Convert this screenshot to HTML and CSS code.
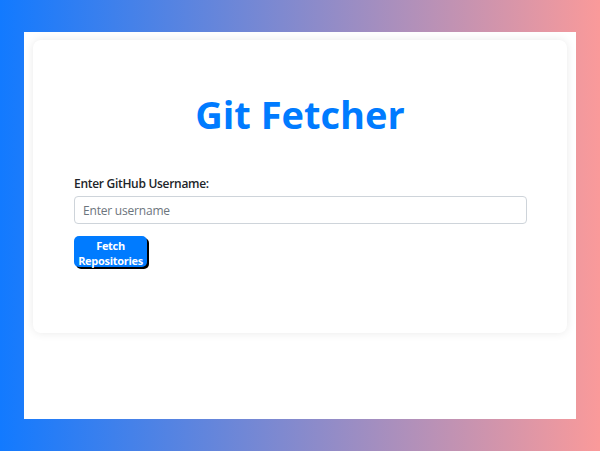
FILE: index.html
```html
<!DOCTYPE html>
<html lang="en">
<head>
<meta charset="utf-8">
<title>Git Fetcher</title>
<link rel="stylesheet" href="styles.css">
</head>
<body>
<div class="page">
  <div class="card">
    <h1 class="title">Git Fetcher</h1>
    <label class="label" for="user">Enter GitHub Username:</label>
    <input class="input" id="user" type="text" placeholder="Enter username">
    <button class="btn" type="button"><span class="btn-line">Fetch</span><span class="btn-line">Repositories</span></button>
  </div>
</div>
</body>
</html>
```

FILE: styles.css
```css
* { box-sizing: border-box; }
html, body { margin: 0; height: 100%; }
body {
  background: linear-gradient(to right, #127aff 0%, #fa9a9a 100%);
  padding: 32px 24px;
  font-family: "Open Sans", "Noto Sans", sans-serif;
}
.page {
  background: #fff;
  height: 387px;
  padding: 8px 9px;
}
.card {
  background: #fff;
  border-radius: 8px;
  box-shadow: 0 0 10px rgba(0,0,0,0.09);
  height: 293px;
  padding: 49px 41px 0;
  display: flex;
  flex-direction: column;
  align-items: flex-start;
}
.title {
  align-self: stretch;
  text-align: center;
  margin: 0 0 36px;
  color: #007bff;
  font-size: 38px;
  font-weight: 700;
  line-height: 50px;
}
.label {
  font-size: 12px;
  font-weight: 600;
  letter-spacing: -0.3px;
  color: #212529;
  line-height: 18px;
  margin-bottom: 3px;
}
.input {
  width: 453px;
  height: 28px;
  border: 1px solid #ced4da;
  border-radius: 4px;
  padding: 0 8px;
  font-family: inherit;
  font-size: 12px;
  letter-spacing: -0.2px;
  color: #495057;
}
.input::placeholder { color: #6c757d; }
.btn {
  margin-top: 12px;
  width: 73px;
  height: 31px;
  background: #007bff;
  color: #fff;
  border: none;
  border-radius: 5px;
  box-shadow: 2px 2px 0 #000;
  font-family: inherit;
  font-size: 11px;
  font-weight: 700;
  letter-spacing: -0.3px;
  line-height: 15px;
  padding: 2px 0 0;
  display: flex;
  flex-direction: column;
  align-items: center;
}
.btn-line { display: block; }
```
